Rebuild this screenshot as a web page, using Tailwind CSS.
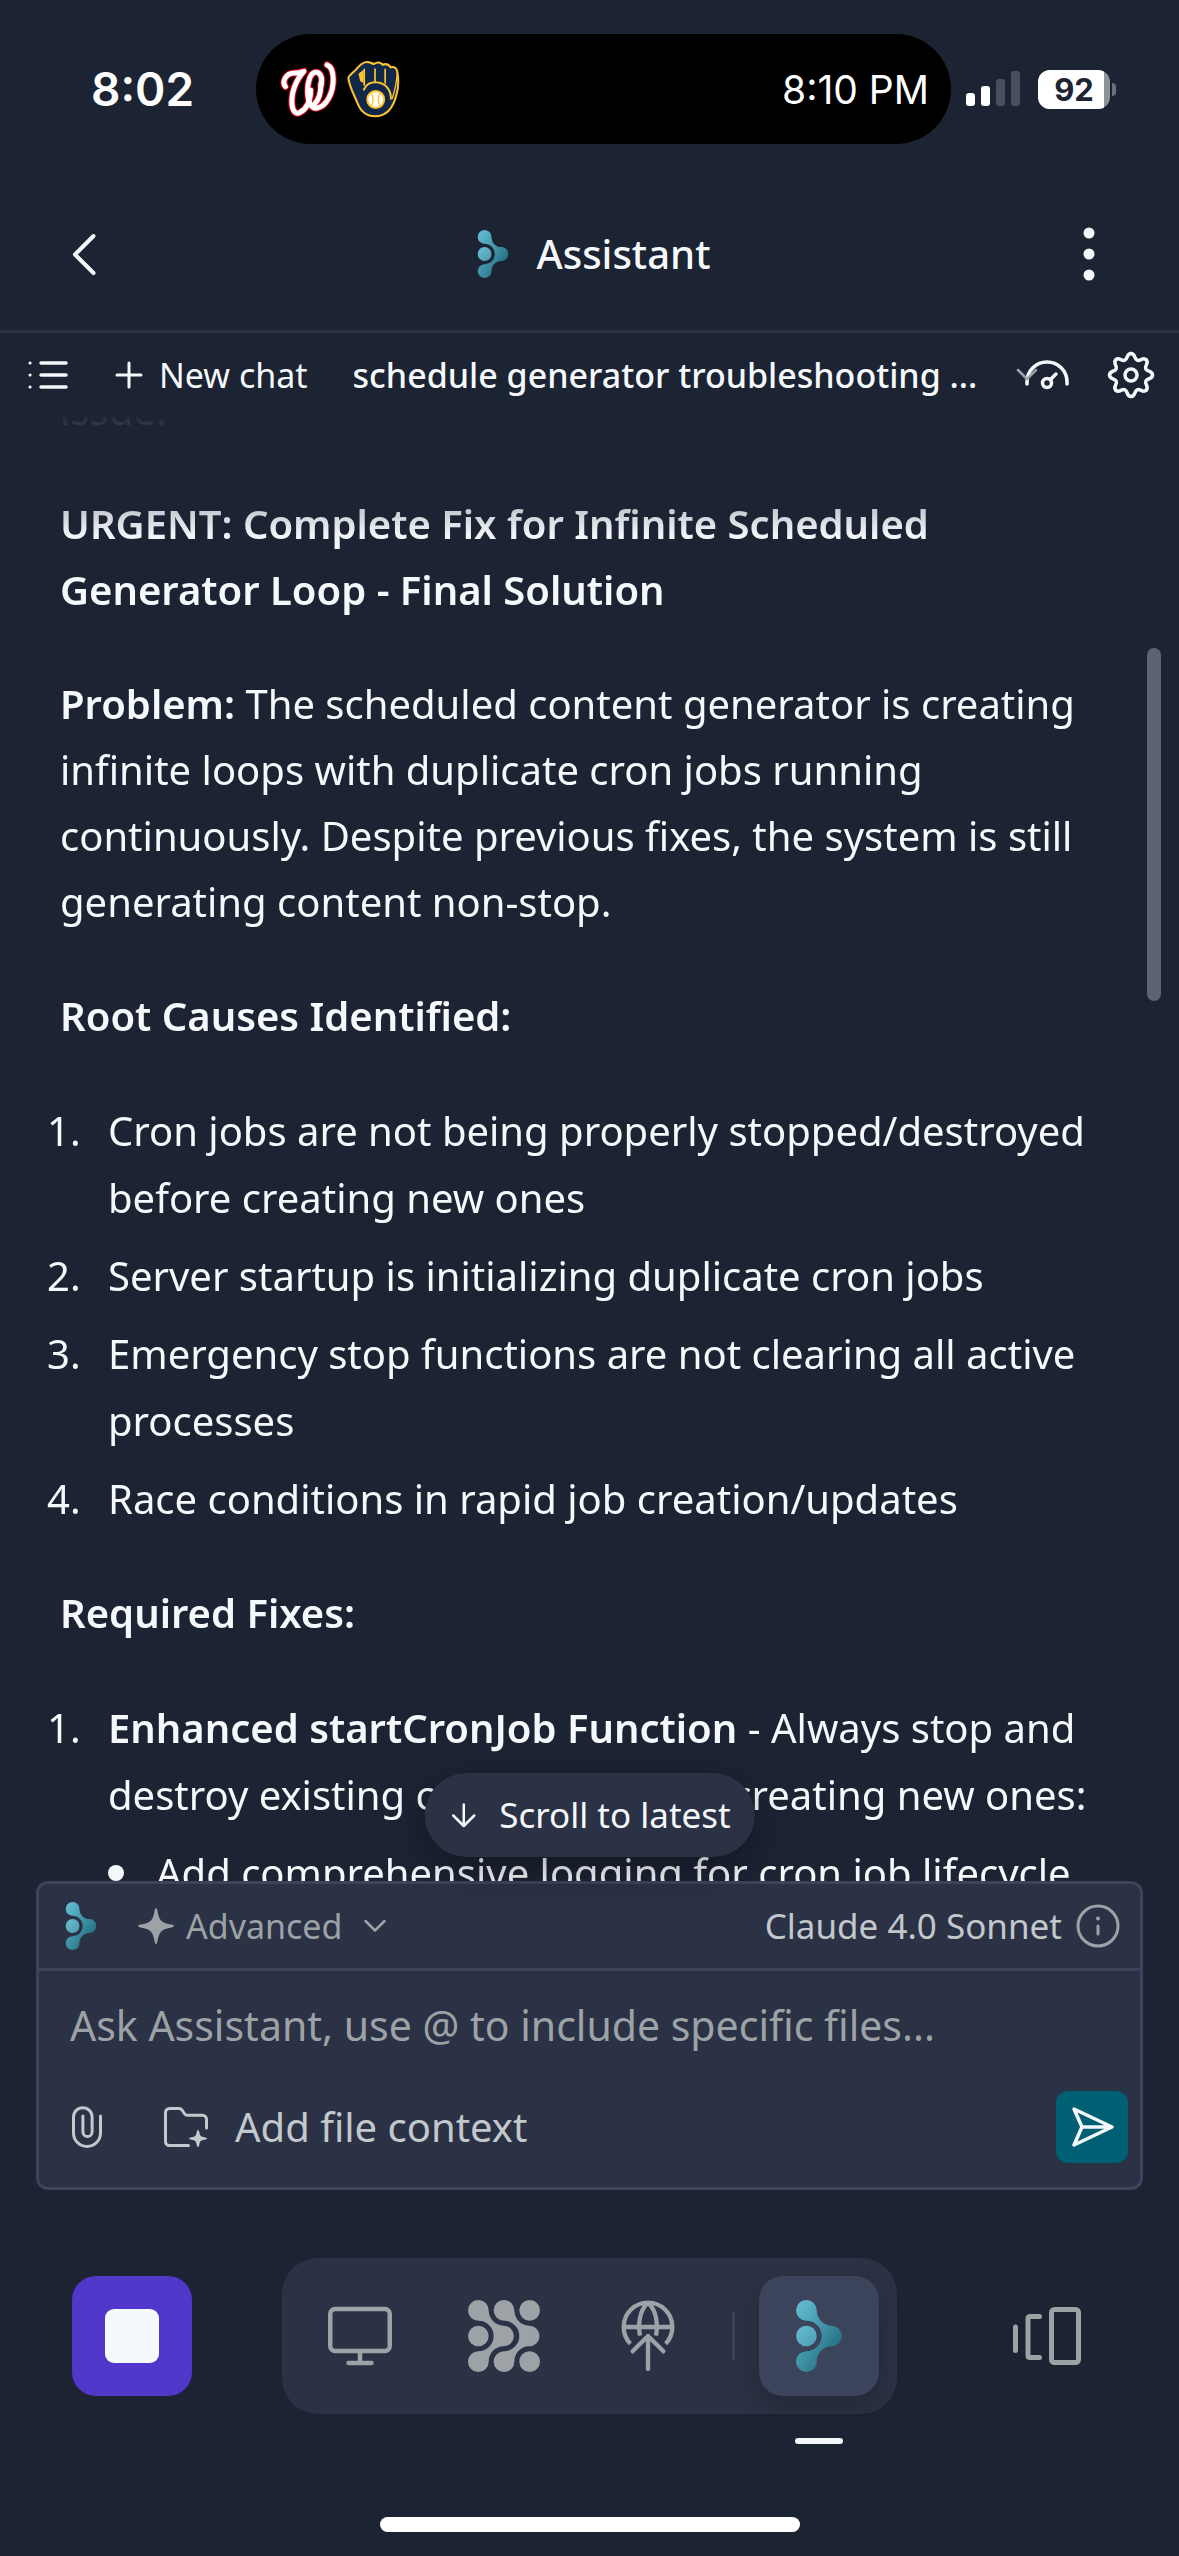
<!DOCTYPE html>
<html lang="en">
<head>
<meta charset="utf-8">
<meta name="viewport" content="width=device-width, initial-scale=1">
<title>Assistant</title>
<script src="https://cdn.jsdelivr.net/npm/@tailwindcss/browser@4"></script>
</head>
<body class="bg-[#1c2333] text-[#f5f9fc] font-['Noto_Sans',sans-serif] text-[40px] leading-[66px]">

<!-- Shared symbols -->
<svg class="absolute size-0" aria-hidden="true">
  <defs>
    <linearGradient id="teal" x1="0" y1="0" x2="1" y2="1">
      <stop offset="0" stop-color="#68c0d6"/>
      <stop offset=".45" stop-color="#4296aa"/>
      <stop offset="1" stop-color="#15596a"/>
    </linearGradient>
    <linearGradient id="tealDot" x1="0" y1="0" x2="1" y2="1">
      <stop offset="0" stop-color="#68bed3"/>
      <stop offset="1" stop-color="#4d9db1"/>
    </linearGradient>
    <path id="branch" d="M7.8 0A3.45 3.45 0 0 1 11.25 3.45C11.25 6.2 13.4 8.55 16.2 8.55A3.45 3.45 0 0 1 16.2 15.45C13.4 15.45 11.25 17.8 11.25 20.55A3.45 3.45 0 1 1 7.8 17.1A5.1 5.1 0 0 0 7.8 6.9A3.45 3.45 0 0 1 7.8 0Z"/>
    <symbol id="logo" viewBox="0 0 24 24">
      <use href="#branch" fill="url(#teal)"/>
      <circle cx="7.8" cy="12" r="3.45" fill="url(#tealDot)"/>
    </symbol>
    <path id="tooth" d="M21.5 0C21.5 4.5 16.1 2.9 14.8 6.1S18.4 12 15.2 15.2"/>
  </defs>
</svg>

<div class="flex flex-col h-screen overflow-hidden">

  <!-- Status bar -->
  <div class="flex items-start shrink-0 h-[178px] pt-[34px] px-[63px] font-['Inter',sans-serif] text-white">
    <div class="flex-1 h-[110px] flex items-center pl-[28px] text-[46px] leading-none font-semibold">8:02</div>
    <div class="w-[695px] shrink-0 h-[110px] rounded-full bg-black flex items-center px-[22px]">
      <svg class="w-[60px] h-[60px]" viewBox="82 60 176 176" fill="none" stroke-linecap="round" stroke-linejoin="round" aria-label="Nationals">
        <g stroke="#d5001c" stroke-width="21">
          <path d="M104 141C93 128 103 101 131 101C143 101 150 99 158 96C134 122 120 160 123 193C125 213 134 223 146 217C168 206 177 180 178 152"/>
          <path d="M208 137C214 114 206 97 191 99C176 102 169 128 169 154C169 184 178 205 195 204C226 200 244 156 244 120C244 100 239 82 226 77"/>
          <path d="M208 133C208 158 201 180 189 192"/>
        </g>
        <g stroke="#fff" stroke-width="15">
          <path d="M104 141C93 128 103 101 131 101C143 101 150 99 158 96C134 122 120 160 123 193C125 213 134 223 146 217C168 206 177 180 178 152"/>
          <path d="M208 137C214 114 206 97 191 99C176 102 169 128 169 154C169 184 178 205 195 204C226 200 244 156 244 120C244 100 239 82 226 77"/>
          <path d="M208 133C208 158 201 180 189 192"/>
        </g>
      </svg>
      <svg class="w-[56px] h-[60px] ml-[7px]" viewBox="285 60 166 176" fill="none" stroke-linecap="round" stroke-linejoin="round" aria-label="Brewers">
        <path d="M295 116C294 110 304 104 316 92C326 80 336 69 349 68C359 67 362 72 371 74C379 68 390 68 397 76C407 72 416 77 421 84C431 80 438 87 440 96C444 115 444 145 438 163C430 198 412 229 374 229C346 229 331 213 322 190C313 166 298 143 295 116Z" fill="#12284b" stroke="#ffc52f" stroke-width="6"/>
        <path d="M325 103L340 91V131L330 124Z" fill="#ffc52f"/>
        <path d="M342 90V136M374 89V126M404 90V130" stroke="#ffc52f" stroke-width="5"/>
        <path d="M341 150C347 134 362 126 379 128C404 130 422 150 421 177" stroke="#ffc52f" stroke-width="6"/>
        <path d="M440 100C438 128 434 150 425 176" stroke="#ffc52f" stroke-width="4"/>
        <circle cx="376" cy="179" r="25" fill="#fff" stroke="#ffc52f" stroke-width="6"/>
        <path d="M363 160C370 171 370 187 363 198M389 160C382 171 382 187 389 198" stroke="#ffc52f" stroke-width="4"/>
      </svg>
      <span class="ml-auto text-[39px] leading-none">8:10 PM</span>
    </div>
    <div class="flex-1 h-[110px] flex items-center justify-end gap-[18px]">
      <svg class="w-[54px] h-[36px]" viewBox="0 0 54 36" fill="#fff" aria-label="Signal">
        <rect x="0" y="22" width="9" height="13" rx="3"/>
        <rect x="15" y="15" width="9" height="20" rx="3"/>
        <rect x="30" y="8" width="9" height="27" rx="3" fill="#494f5c"/>
        <rect x="45" y="0" width="9" height="35" rx="3" fill="#494f5c"/>
      </svg>
      <div class="flex items-center gap-[2px]">
        <div class="relative w-[72px] h-[39px] rounded-[12px] overflow-hidden bg-[#8e929a] text-[#1c2333]">
          <div class="w-[66px] h-full bg-white"></div>
          <span class="absolute inset-0 flex items-center justify-center text-[31px] leading-none font-bold">92</span>
        </div>
        <div class="w-[4px] h-[13px] rounded-r-full bg-[#6b707b]"></div>
      </div>
    </div>
  </div>

  <!-- Title bar -->
  <header class="flex items-center justify-between shrink-0 h-[155px] px-[60px] border-b-3 border-[#2b3245]">
    <button class="size-[60px] flex items-center" aria-label="Back">
      <svg class="size-[48px]" viewBox="0 0 48 48" fill="none" stroke="currentColor" stroke-width="4" stroke-linecap="round" stroke-linejoin="round"><path d="M33.500 6L15 24.500L33.500 43"/></svg>
    </button>
    <h1 class="flex items-center gap-[20px] font-medium">
      <svg class="size-[48px]"><use href="#logo"/></svg>Assistant
    </h1>
    <button class="size-[60px]" aria-label="More">
      <svg class="size-[60px]" viewBox="0 0 60 60" fill="currentColor"><circle cx="30" cy="9" r="5.500"/><circle cx="30" cy="30" r="5.500"/><circle cx="30" cy="51" r="5.500"/></svg>
    </button>
  </header>

  <!-- Chat toolbar -->
  <div class="flex items-center shrink-0 h-[84px] px-[24px] text-[34px]">
    <button class="size-[48px] shrink-0" aria-label="Chat list">
      <svg class="size-[48px]" viewBox="0 0 48 48" fill="none" stroke="currentColor" stroke-width="3.500" stroke-linecap="round"><path d="M17 12H42M17 24H42M17 36H42"/><path stroke-width="3" d="M6 12h.1M6 24h.1M6 36h.1"/></svg>
    </button>
    <button class="flex items-center gap-[12px] ml-[39px] shrink-0">
      <svg class="size-[36px]" viewBox="0 0 36 36" fill="none" stroke="currentColor" stroke-width="3" stroke-linecap="round"><path d="M18 6V30M6 18H30"/></svg>New chat
    </button>
    <button class="flex-1 min-w-0 ml-[45px] text-left font-medium whitespace-nowrap">schedule generator troubleshooting ...</button>
    <div class="relative flex items-center gap-[36px] shrink-0">
      <svg class="absolute -left-[8px] top-[14px] size-[24px]" viewBox="0 0 24 24" fill="none" stroke="#9da2a6" stroke-width="2.500" stroke-linecap="round"><path d="M3 5L12 14L21 5"/></svg>
      <button class="size-[48px]" aria-label="Usage">
        <svg class="size-[48px]" viewBox="0 0 48 48" fill="none" stroke="currentColor" stroke-width="3.500" stroke-linecap="round"><path d="M4 33V31A20 20 0 0 1 44 31V33"/><circle cx="24" cy="32" r="4.500"/><path d="M27.500 28.500L33 23"/></svg>
      </button>
      <button class="size-[48px]" aria-label="Settings">
        <svg class="size-[48px]" viewBox="-24 -24 48 48" fill="none" stroke="currentColor" stroke-width="3.500" stroke-linecap="round">
          <use href="#tooth"/><use href="#tooth" transform="rotate(45)"/><use href="#tooth" transform="rotate(90)"/><use href="#tooth" transform="rotate(135)"/><use href="#tooth" transform="rotate(180)"/><use href="#tooth" transform="rotate(225)"/><use href="#tooth" transform="rotate(270)"/><use href="#tooth" transform="rotate(315)"/>
          <circle r="6"/>
        </svg>
      </button>
    </div>
  </div>

  <!-- Conversation -->
  <div class="relative flex-1 min-h-0 flex flex-col">
    <main class="flex-1 min-h-0 overflow-hidden px-[60px] [mask-image:linear-gradient(to_bottom,rgb(0_0_0/0.04),black_120px)]">
      <div class="-mt-[40px] flex flex-col gap-[48px]">
        <p>issue.</p>
        <h2 class="font-semibold">URGENT: Complete Fix for Infinite Scheduled Generator Loop - Final Solution</h2>
        <p><strong class="font-semibold">Problem:</strong> The scheduled content generator is creating infinite loops with duplicate cron jobs running continuously. Despite previous fixes, the system is still generating content non-stop.</p>
        <h3 class="font-semibold">Root Causes Identified:</h3>
        <ol class="-ml-[13px] flex flex-col gap-[11px] leading-[67px]">
          <li class="flex"><span class="w-[61px] shrink-0">1.</span><span>Cron jobs are not being properly stopped/destroyed before creating new ones</span></li>
          <li class="flex"><span class="w-[61px] shrink-0">2.</span><span>Server startup is initializing duplicate cron jobs</span></li>
          <li class="flex"><span class="w-[61px] shrink-0">3.</span><span>Emergency stop functions are not clearing all active processes</span></li>
          <li class="flex"><span class="w-[61px] shrink-0">4.</span><span>Race conditions in rapid job creation/updates</span></li>
        </ol>
        <h3 class="font-semibold">Required Fixes:</h3>
        <ol class="-ml-[13px] leading-[67px]">
          <li class="flex"><span class="w-[61px] shrink-0">1.</span>
            <div class="flex flex-col gap-[11px]">
              <p><strong class="font-semibold">Enhanced startCronJob Function</strong> - Always stop and destroy existing cron jobs before creating new ones:</p>
              <ul>
                <li class="flex items-center"><span class="size-[16px] mr-[32px] shrink-0 rounded-full bg-[#f5f9fc]"></span><span class="whitespace-nowrap">Add comprehensive logging for cron job lifecycle</span></li>
              </ul>
            </div>
          </li>
        </ol>
      </div>
    </main>
    <div class="absolute right-[18px] top-[231px] w-[14px] h-[353px] rounded-full bg-[#5d646f]"></div>
    <button class="absolute bottom-[24px] left-1/2 -translate-x-1/2 h-[84px] px-[24px] rounded-full bg-[#2b3245] shadow-[0_12px_36px_rgba(2,2,3,0.32)] flex items-center gap-[21px] text-[35px] whitespace-nowrap">
      <svg class="size-[30px]" viewBox="0 0 30 30" fill="none" stroke="currentColor" stroke-width="2.500" stroke-linecap="round" stroke-linejoin="round"><path d="M15 4.500V26M4.500 15.500L15 26L25.500 15.500"/></svg>Scroll to latest
    </button>
  </div>

  <!-- Composer -->
  <form class="shrink-0 mx-[36px] rounded-[12px] border-3 border-[#3c445c] bg-[#2b3245]">
    <div class="flex items-center h-[87px] border-b-3 border-[#3c445c] px-[18px] text-[34px] text-[#9da2a6]">
      <svg class="size-[48px]"><use href="#logo"/></svg>
      <button type="button" class="flex items-center ml-[30px]">
        <svg class="size-[42px]" viewBox="0 0 42 42" fill="currentColor"><path d="M21 3Q22 3 22.400 5.500C24 15.500 26.500 18 36.500 19.600Q39 20 39 21T36.500 22.400C26.500 24 24 26.500 22.400 36.500Q22 39 21 39T19.600 36.500C18 26.500 15.500 24 5.500 22.400Q3 22 3 21T5.500 19.600C15.500 18 18 15.500 19.600 5.500Q20 3 21 3Z"/></svg>
        <span class="ml-[9px]">Advanced</span>
        <svg class="size-[30px] ml-[18px]" viewBox="0 0 30 30" fill="none" stroke="currentColor" stroke-width="2.500" stroke-linecap="round" stroke-linejoin="round"><path d="M5.500 10L15 19.500L24.500 10"/></svg>
      </button>
      <span class="ml-auto text-[35px] text-[#c2c8cc]">Claude 4.0 Sonnet</span>
      <button type="button" class="ml-[12px] size-[48px]" aria-label="Model info">
        <svg class="size-[48px]" viewBox="0 0 48 48" fill="none" stroke="currentColor" stroke-width="3" stroke-linecap="round"><circle cx="24" cy="24" r="20"/><path d="M24 24V32"/><circle cx="24" cy="16.500" r="2" fill="currentColor" stroke="none"/></svg>
      </button>
    </div>
    <div class="py-[24px] pl-[24px] pr-[12px]">
      <textarea rows="1" aria-label="Message" placeholder="Ask Assistant, use @ to include specific files..." class="block w-full h-[60px] pl-[7px] resize-none bg-transparent outline-none text-[41px] leading-[60px] overflow-hidden placeholder:text-[#9da2a6]"></textarea>
      <div class="flex items-center mt-[36px] h-[72px] text-[#c2c8cc]">
        <button type="button" class="size-[48px]" aria-label="Attach">
          <svg class="size-[48px]" viewBox="0 0 48 48" fill="none" stroke="currentColor" stroke-width="3" stroke-linecap="round"><path d="M37.500 13V30A13.500 13.500 0 0 1 10.500 30V14A9.300 9.300 0 0 1 29.100 14V29A4.600 4.600 0 0 1 19.900 29V13"/></svg>
        </button>
        <button type="button" class="flex items-center gap-[25px] ml-[51px]">
          <svg class="size-[48px]" viewBox="0 0 48 48" fill="none" stroke="currentColor" stroke-width="3" stroke-linecap="round" stroke-linejoin="round"><path d="M26.500 42.500H7.500A4 4 0 0 1 3.500 38.500V9.500A4 4 0 0 1 7.500 5.500H17Q19 5.500 20 7L22.500 10.800Q23.500 12.300 25.500 12.300H40.500A4 4 0 0 1 44.500 16.300V25"/><path stroke="none" fill="currentColor" d="M36 27Q37 27 37.300 29C38 33 38.500 33.500 42.500 34.200Q45 34.600 45 35.500T42.500 36.800C38.500 37.500 38 38 37.300 42Q37 44 36 44T34.700 42C34 38 33.500 37.500 29.500 36.800Q27 36.400 27 35.500T29.500 34.200C33.500 33.500 34 33 34.700 29Q35 27 36 27Z"/></svg>Add file context
        </button>
        <button type="submit" class="ml-auto size-[72px] rounded-[12px] bg-[#006073] text-[#f5f9fc] flex items-center justify-center" aria-label="Send">
          <svg class="size-[48px]" viewBox="0 0 48 48" fill="none" stroke="currentColor" stroke-width="3.500" stroke-linecap="round" stroke-linejoin="round"><path d="M6 6L44 24L6 42L14 24ZM14 24H44"/></svg>
        </button>
      </div>
    </div>
  </form>

  <!-- Bottom navigation -->
  <nav class="shrink-0 mt-[68px] h-[156px] flex items-center justify-between px-[72px] text-[#9da2a6]">
    <button class="size-[120px] rounded-[24px] bg-[#5138cb] flex items-center justify-center" aria-label="Stop"><span class="size-[54px] rounded-[9px] bg-[#f5f9fc]"></span></button>
    <div class="flex items-center gap-[24px] h-full p-[18px] rounded-[36px] bg-[#2b3245]">
      <button class="size-[120px] flex items-center justify-center" aria-label="Preview">
        <svg class="size-[72px]" viewBox="0 0 72 72" fill="none" stroke="currentColor" stroke-width="4.500" stroke-linecap="round"><rect x="6.250" y="9" width="59.500" height="42" rx="5"/><path d="M36 52V63M24.500 63H47.500"/></svg>
      </button>
      <button class="size-[120px] flex items-center justify-center" aria-label="Apps">
        <svg class="size-[72px]" viewBox="0 0 24 24" fill="currentColor"><use href="#branch" x="-4.350"/><use href="#branch" x="4.200"/><circle cx="3.450" cy="12" r="3.450"/><circle cx="20.550" cy="3.450" r="3.450"/><circle cx="20.550" cy="20.550" r="3.450"/></svg>
      </button>
      <button class="size-[120px] flex items-center justify-center" aria-label="Deploy">
        <svg class="size-[72px]" viewBox="516 90 216 216" fill="none" stroke="currentColor" stroke-width="13"><path d="M571 221A73 73 0 1 1 677 221M551 171H697M622 100C600 122 593 160 600 197M626 100C648 122 655 160 648 197"/><path stroke-linecap="round" stroke-linejoin="round" d="M578 244L624 198L670 244M624 200V297"/></svg>
      </button>
      <span class="w-[3px] h-[48px] bg-[#3c445c]"></span>
      <button class="relative size-[120px] rounded-[24px] bg-[#3c445c] shadow-[0_12px_24px_rgba(2,2,3,0.2)] flex items-center justify-center" aria-label="Assistant">
        <svg class="size-[72px]"><use href="#logo"/></svg>
        <span class="absolute left-[36px] top-[162px] w-[48px] h-[6px] rounded-[3px] bg-[#f5f9fc]"></span>
      </button>
    </div>
    <button class="size-[120px] flex items-center justify-center" aria-label="Tabs">
      <svg class="size-[72px]" viewBox="0 0 72 72" fill="none" stroke="currentColor" stroke-width="5" stroke-linecap="round" stroke-linejoin="round"><path d="M4.500 27V50.500"/><path d="M28.500 16.500H19Q17 16.500 17 18.500V55.500Q17 57.500 19 57.500H28.500"/><rect x="40.500" y="9.500" width="27" height="53" rx="3"/></svg>
    </button>
  </nav>

  <!-- Home indicator -->
  <div class="shrink-0 mt-[103px] mb-[24px] mx-auto w-[420px] h-[15px] rounded-full bg-white"></div>
</div>
</body>
</html>
